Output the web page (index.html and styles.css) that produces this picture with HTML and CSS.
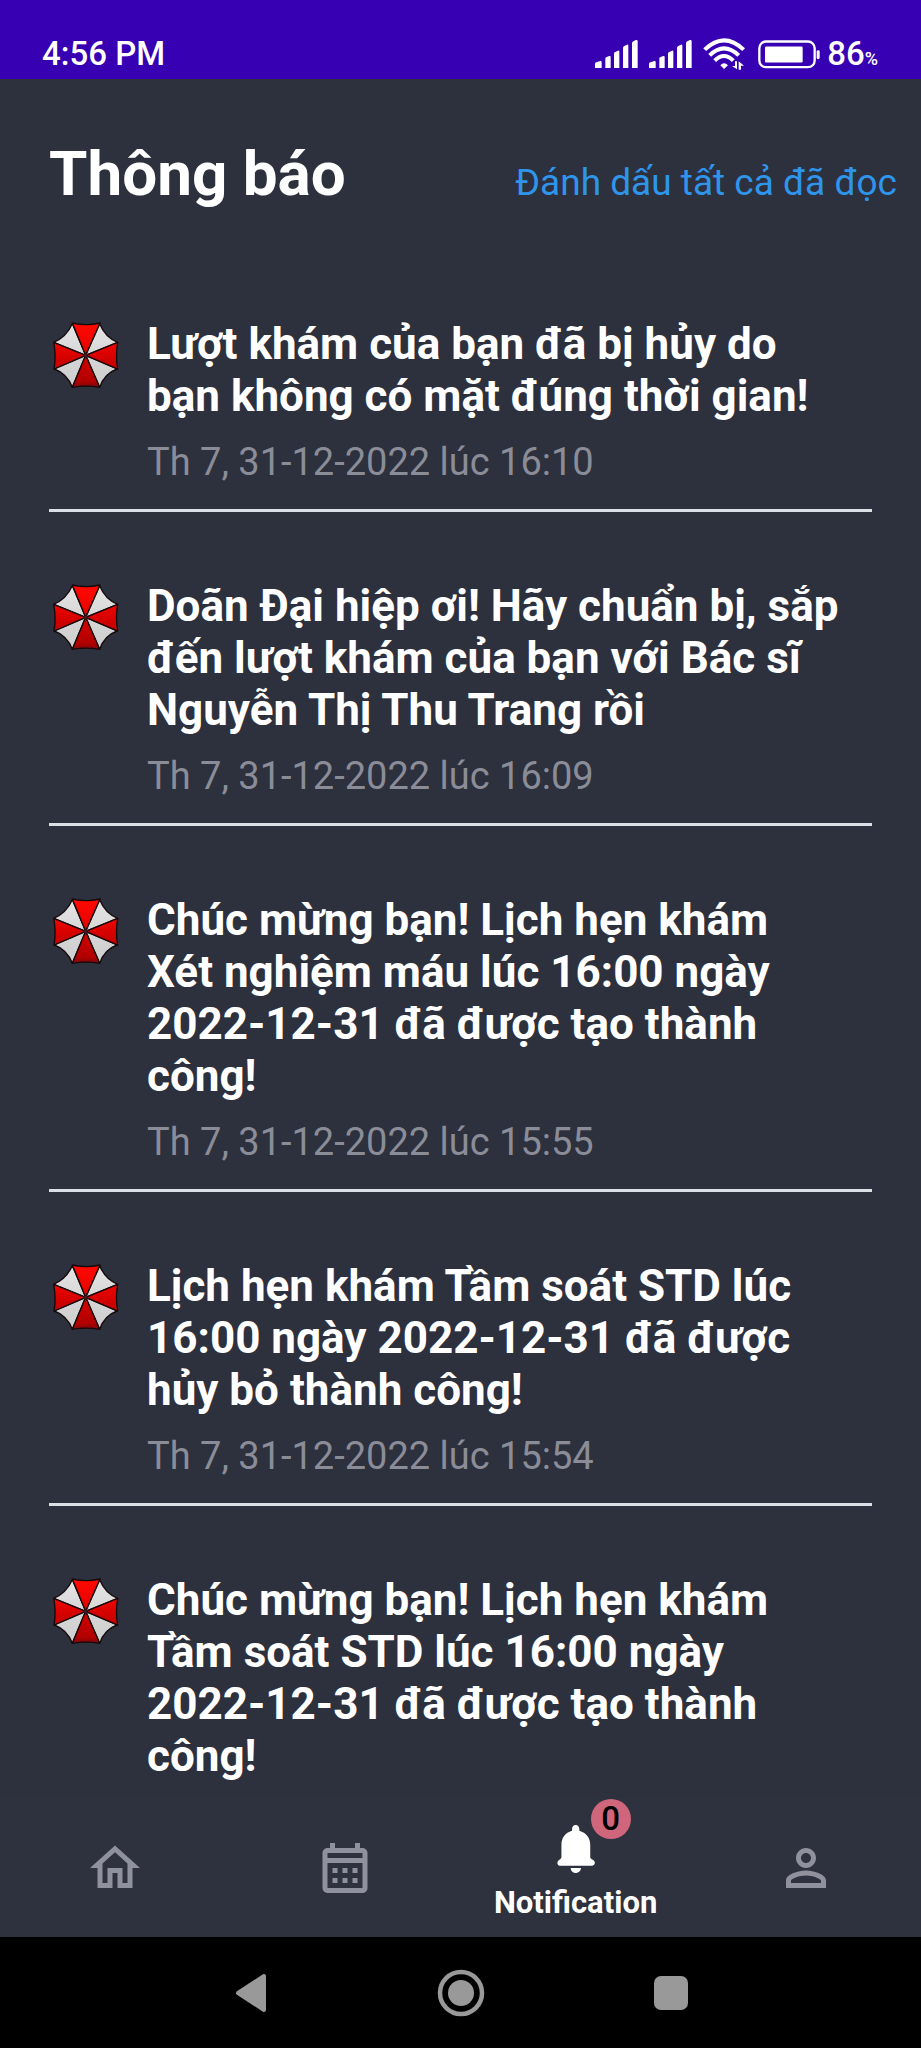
FILE: index.html
```html
<!DOCTYPE html>
<html lang="vi">
<head>
<meta charset="utf-8">
<meta name="viewport" content="width=device-width, initial-scale=1">
<title>Thông báo</title>
<link rel="stylesheet" href="styles.css">
</head>
<body>
<svg class="defs" aria-hidden="true">
  <defs>
    <linearGradient id="red" gradientUnits="userSpaceOnUse" x1="0" y1="40" x2="0" y2="236">
      <stop offset="0" stop-color="#ff0a00"/><stop offset=".3" stop-color="#f00500"/><stop offset=".6" stop-color="#cc0000"/><stop offset=".9" stop-color="#b00000"/><stop offset="1" stop-color="#6c0a10"/>
    </linearGradient>
    <linearGradient id="white" gradientUnits="userSpaceOnUse" x1="0" y1="40" x2="0" y2="236">
      <stop offset="0" stop-color="#e6e6e6"/><stop offset=".6" stop-color="#d4d4d4"/><stop offset="1" stop-color="#cfcfcf"/>
    </linearGradient>
    <symbol id="umbrella" viewBox="39 37 201 201">
      <g stroke="#15090b" stroke-width="4" stroke-linejoin="round">
        <path fill="url(#white)" d="M140 137 100 42Q82 82 44 98ZM140 137 182 42Q198 82 236 98ZM140 137 46 178Q84 192 100 233ZM140 137 234 178Q196 192 182 233Z"/>
        <path fill="url(#red)" d="M140 137 100 40Q141 50 183 40ZM140 137 236 98Q229 138 236 178ZM140 137 182 233Q141 226 100 233ZM140 137 44 98Q52 138 45 178Z"/>
      </g>
      <circle cx="140" cy="137" r="6" fill="#3a1a1a"/>
    </symbol>
    <symbol id="signal" viewBox="0 0 129 84">
      <path fill="#fff" d="M0 84V72q0-4 4-5l12-4q4-1 4 3v18zM31 84V56q0-4 4-5l8-3q4-1 4 3v33zM57 84V41q0-4 4-5l8-4q4-1 4 3v49zM84 84V24q0-4 4-6l8-4q4-1 4 3v67zM111 84V10q0-4 4-6l8-4q5-1 5 4v80z"/>
    </symbol>
  </defs>
</svg>

<header class="status">
  <span class="status-time">4:56 PM</span>
  <div class="status-icons">
    <svg class="signal" aria-hidden="true"><use href="#signal"/></svg>
    <svg class="signal" aria-hidden="true"><use href="#signal"/></svg>
    <svg class="wifi" viewBox="372 48 126 96" aria-hidden="true">
      <g fill="none" stroke="#fff" stroke-width="12">
        <path d="M377 83Q435 27 494 83"/><path d="M392 100Q435 58 479 100"/><path d="M407 116Q435 88 463 116"/>
      </g>
      <path fill="#fff" d="M435 141 424 130Q435 117 447 130ZM459 132h9v-14h6v24zM479 143v-25l16 13h-9v12z"/>
    </svg>
    <svg class="battery" viewBox="537 52 186 86" aria-hidden="true">
      <rect x="541" y="56" width="166" height="77" rx="20" fill="none" stroke="#fff" stroke-width="7"/>
      <rect x="558" y="71" width="113" height="48" rx="4" fill="#fff"/>
      <rect x="713" y="82" width="9" height="27" rx="4" fill="#fff"/>
    </svg>
    <span class="status-level">86<small>%</small></span>
  </div>
</header>

<div class="heading">
  <h1>Thông báo</h1>
  <button type="button" class="mark-read">Đánh dấu tất cả đã đọc</button>
</div>

<main class="list">
  <article class="item">
    <svg class="logo" aria-hidden="true"><use href="#umbrella"/></svg>
    <div class="body">
      <p class="message">Lượt khám của bạn đã bị hủy do<br>bạn không có mặt đúng thời gian!</p>
      <time datetime="2022-12-31T16:10">Th 7, 31-12-2022 lúc 16:10</time>
    </div>
  </article>
  <article class="item">
    <svg class="logo" aria-hidden="true"><use href="#umbrella"/></svg>
    <div class="body">
      <p class="message">Doãn Đại hiệp ơi! Hãy chuẩn bị, sắp<br>đến lượt khám của bạn với Bác sĩ<br>Nguyễn Thị Thu Trang rồi</p>
      <time datetime="2022-12-31T16:09">Th 7, 31-12-2022 lúc 16:09</time>
    </div>
  </article>
  <article class="item">
    <svg class="logo" aria-hidden="true"><use href="#umbrella"/></svg>
    <div class="body">
      <p class="message">Chúc mừng bạn! Lịch hẹn khám<br>Xét nghiệm máu lúc 16:00 ngày<br>2022-12-31 đã được tạo thành<br>công!</p>
      <time datetime="2022-12-31T15:55">Th 7, 31-12-2022 lúc 15:55</time>
    </div>
  </article>
  <article class="item">
    <svg class="logo" aria-hidden="true"><use href="#umbrella"/></svg>
    <div class="body">
      <p class="message">Lịch hẹn khám Tầm soát STD lúc<br>16:00 ngày 2022-12-31 đã được<br>hủy bỏ thành công!</p>
      <time datetime="2022-12-31T15:54">Th 7, 31-12-2022 lúc 15:54</time>
    </div>
  </article>
  <article class="item">
    <svg class="logo" aria-hidden="true"><use href="#umbrella"/></svg>
    <div class="body">
      <p class="message">Chúc mừng bạn! Lịch hẹn khám<br>Tầm soát STD lúc 16:00 ngày<br>2022-12-31 đã được tạo thành<br>công!</p>
    </div>
  </article>
</main>

<nav class="tabs">
  <button type="button" class="tab" aria-label="Home">
    <svg class="tab-icon" viewBox="0 0 24 24"><path d="M12 5.69l5 4.5V18h-2v-6H9v6H7v-7.81l5-4.5M12 3L2 12h3v8h6v-6h2v6h6v-8h3L12 3z"/></svg>
  </button>
  <button type="button" class="tab" aria-label="Calendar">
    <svg class="tab-icon" viewBox="0 -1 24 24"><path d="M7 11h2v2H7v-2m14-6v14c0 1.11-.89 2-2 2H5a2 2 0 0 1-2-2V5c0-1.1.9-2 2-2h1V1h2v2h8V1h2v2h1a2 2 0 0 1 2 2M5 7h14V5H5v2m14 12V9H5v10h14m-4-6v-2h2v2h-2m-4 0v-2h2v2h-2m-4 2h2v2H7v-2m8 2v-2h2v2h-2m-4 0v-2h2v2h-2z"/></svg>
  </button>
  <button type="button" class="tab tab-active">
    <span class="bell-wrap">
      <svg class="bell" viewBox="289 135 114 145" aria-hidden="true"><path d="M345 135c7 0 11 5 11 13v4c21 6 33 22 33 42v38c0 4 3 6 8 8 10 6 6 18-2 18H297c-8 0-11-12-1-18 4-3 6-5 6-8v-38c0-20 11-36 32-42v-4c0-8 4-13 11-13zM330 265h31c0 9-8 15-16 15s-15-6-15-15z"/></svg>
      <span class="badge">0</span>
    </span>
    <span class="tab-label">Notification</span>
  </button>
  <button type="button" class="tab" aria-label="Profile">
    <svg class="tab-icon" viewBox="0 0 24 24"><path d="M12 6c1.1 0 2 .9 2 2s-.9 2-2 2-2-.9-2-2 .9-2 2-2m0 9c2.7 0 5.8 1.29 6 2v1H6v-.99c.2-.72 3.3-2.01 6-2.01m0-11C9.79 4 8 5.79 8 8s1.79 4 4 4 4-1.79 4-4-1.79-4-4-4zm0 9c-2.67 0-8 1.34-8 4v3h16v-3c0-2.66-5.33-4-8-4z"/></svg>
  </button>
</nav>

<footer class="system">
  <button type="button" aria-label="Back">
    <svg width="32" height="40" viewBox="0 0 32 40"><path d="M3 20 29 3v34z" fill="#999" stroke="#999" stroke-width="4" stroke-linejoin="round"/></svg>
  </button>
  <button type="button" aria-label="Home screen">
    <svg width="48" height="48" viewBox="0 0 48 48"><circle cx="24" cy="24" r="21" fill="none" stroke="#999" stroke-width="4.5"/><circle cx="24" cy="24" r="13" fill="#999"/></svg>
  </button>
  <button type="button" aria-label="Recent apps">
    <svg width="34" height="34" viewBox="0 0 34 34"><rect width="34" height="34" rx="7" fill="#999"/></svg>
  </button>
</footer>
</body>
</html>
```
FILE: styles.css
```css
* { box-sizing: border-box; }

body {
  margin: 0;
  height: 100vh;
  display: flex;
  flex-direction: column;
  overflow: hidden;
  background: #2d303d;
  color: #fff;
  font-family: Roboto, "Noto Sans", sans-serif;
}

button {
  margin: 0;
  padding: 0;
  border: 0;
  background: none;
  color: inherit;
  font: inherit;
  cursor: pointer;
}

svg { display: block; flex: none; }
.defs { position: absolute; width: 0; height: 0; }

.status {
  flex: none;
  display: flex;
  align-items: flex-end;
  justify-content: space-between;
  height: 79px;
  padding: 0 43px 5px 42px;
  background: #3700b3;
}
.status-time,
.status-level { font-size: 33px; font-weight: 500; line-height: 40px; }
.status-level small { font-size: 18px; line-height: 18px; }
.status-icons { display: flex; align-items: center; }
.signal { width: 43px; height: 28px; margin-right: 11px; }
.wifi { width: 42px; height: 32px; margin-right: 13px; }
.battery { width: 62px; height: 29px; margin-right: 7px; }

.heading {
  flex: none;
  display: flex;
  align-items: baseline;
  justify-content: space-between;
  padding: 59px 24px 40px 49px;
}
h1 { margin: 0; font-size: 62px; font-weight: 700; line-height: 72px; }
.mark-read { font-size: 37px; line-height: 44px; color: #2f95ea; }

.list { flex: 1 1 0; min-height: 0; overflow: hidden; }
.item {
  display: flex;
  align-items: flex-start;
  gap: 28px;
  margin: 0 49px;
  padding: 68px 0 25px 3px;
  border-bottom: 3px solid #dcdfe6;
}
.logo { width: 67px; height: 67px; margin-top: 4px; }
.body { display: flex; flex-direction: column; gap: 18px; }
.message { margin: 0; font-size: 44px; font-weight: 700; line-height: 52px; white-space: nowrap; }
time { font-size: 38px; line-height: 44px; color: #8a8d98; }

.tabs {
  flex: none;
  display: grid;
  grid-template-columns: repeat(4, 1fr);
  height: 139px;
  background: #2e313e;
}
.tab { display: flex; flex-direction: column; align-items: center; justify-content: center; }
.tab-icon { width: 60px; height: 60px; fill: #8f929d; }
.tab-active { justify-content: flex-end; gap: 12px; padding-bottom: 16px; }
.bell-wrap { position: relative; }
.bell { width: 38px; height: 48px; fill: #fff; }
.badge {
  position: absolute;
  left: 34px;
  top: -26px;
  width: 40px;
  height: 40px;
  border-radius: 50%;
  background: #d0667c;
  color: #000;
  font-size: 33px;
  font-weight: 500;
  line-height: 40px;
  text-align: center;
}
.tab-label { font-size: 31px; font-weight: 700; line-height: 36px; }

.system {
  flex: none;
  display: flex;
  justify-content: center;
  height: 111px;
  background: #000;
}
.system button { width: 210px; display: flex; align-items: center; justify-content: center; }
```
